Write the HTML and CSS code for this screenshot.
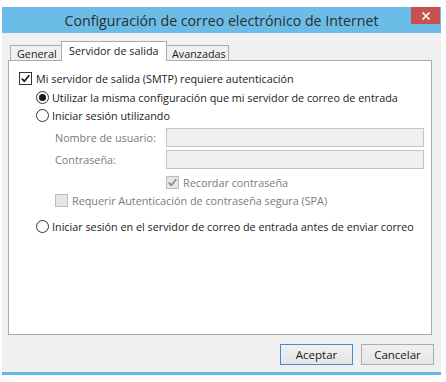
FILE: index.html
```html
<!DOCTYPE html>
<html lang="es">
<head>
	<meta charset="UTF-8">
	<title>Configuración de correo electrónico de Internet</title>
	<link rel="stylesheet" href="styles.css">
</head>
<body>
	<div class="window">
		<div class="titlebar">
			<span class="title">Configuración de correo electrónico de Internet</span>
			<div class="close">
				<svg width="10" height="10" viewBox="0 0 10 10"><path d="M1.5 1.5 L8.5 8.5 M8.5 1.5 L1.5 8.5" stroke="#fff" stroke-width="1.6" fill="none"/></svg>
			</div>
		</div>
		<div class="content">
			<div class="tabs">
				<div class="tab first">General</div>
				<div class="tab active">Servidor de salida</div>
				<div class="tab last">Avanzadas</div>
			</div>
			<div class="panel">
				<div class="row smtp">
					<span class="check on"><svg width="11" height="11" viewBox="0 0 11 11"><path d="M1.8 5.6 L4.3 8.2 L9.3 2.2" stroke="#1a1a1a" stroke-width="1.7" fill="none"/></svg></span>
					<span>Mi servidor de salida (SMTP) requiere autenticación</span>
				</div>
				<div class="row sub same">
					<span class="radio on"></span>
					<span>Utilizar la misma configuración que mi servidor de correo de entrada</span>
				</div>
				<div class="row sub">
					<span class="radio"></span>
					<span>Iniciar sesión utilizando</span>
				</div>
				<div class="row field user">
					<span class="label">Nombre de usuario:</span>
					<span class="input"></span>
				</div>
				<div class="row field pass">
					<span class="label">Contraseña:</span>
					<span class="input"></span>
				</div>
				<div class="row remember off">
					<span class="check dis"><svg width="11" height="11" viewBox="0 0 11 11"><path d="M1.8 5.6 L4.3 8.2 L9.3 2.2" stroke="#8a8a8a" stroke-width="1.7" fill="none"/></svg></span>
					<span>Recordar contraseña</span>
				</div>
				<div class="row spa off">
					<span class="check dis"></span>
					<span>Requerir Autenticación de contraseña segura (SPA)</span>
				</div>
				<div class="row sub before">
					<span class="radio"></span>
					<span>Iniciar sesión en el servidor de correo de entrada antes de enviar correo</span>
				</div>
			</div>
			<div class="buttons">
				<button class="btn default">Aceptar</button>
				<button class="btn">Cancelar</button>
			</div>
		</div>
	</div>
</body>
</html>
```

FILE: styles.css
```css
body{
	margin: 0;
	background: #fff;
	font-family: "Open Sans", "Noto Sans", sans-serif;
	font-size: 10.8px;
	color: #1a1a1a;
}
.window{
	margin: 7px 0 0 2px;
	width: 439px;
	border-bottom: 3px solid #63b5e3;
}
.titlebar{
	position: relative;
	height: 26px;
	background: #6bbde8;
	display: flex;
	align-items: center;
	justify-content: center;
}
.title{
	font-size: 14.2px;
	color: #2d2d2d;
	margin-top: 1px;
}
.close{
	position: absolute;
	top: 0;
	right: 1px;
	width: 29px;
	height: 17px;
	background: #c75050;
	display: flex;
	align-items: center;
	justify-content: center;
}
.content{
	background: #f0f0f0;
	padding: 8px 0 0 6px;
	height: 331px;
}
.tabs{
	display: flex;
	align-items: flex-start;
	padding-left: 2px;
	height: 20px;
	margin-bottom: -1px;
}
.tab{
	box-sizing: border-box;
	height: 15px;
	margin-top: 4px;
	border: 1px solid #acacac;
	border-bottom: none;
	background: #f0f0f0;
	padding: 0 0 0 6px;
	line-height: 15px;
}
.tab.first{
	width: 53px;
}
.tab.last{
	width: 64px;
}
.tab.active{
	position: relative;
	z-index: 1;
	width: 106px;
	height: 20px;
	margin: 0 -2px;
	background: #fff;
	padding-left: 7px;
	line-height: 17px;
}
.panel{
	box-sizing: border-box;
	width: 424px;
	height: 275px;
	background: #fff;
	border: 1px solid #acacac;
	padding: 8px 0 0 10px;
}
.row{
	display: flex;
	align-items: center;
	height: 18px;
	white-space: nowrap;
}
.row.sub{
	padding-left: 17px;
}
.row.same{
	margin-top: 1px;
}
.row.field{
	height: 19px;
	padding-left: 36px;
}
.row.user{
	margin-top: 4px;
}
.row.pass{
	margin-top: 3px;
}
.row.remember{
	margin-top: 4px;
	padding-left: 147px;
}
.row.spa{
	padding-left: 36px;
}
.row.before{
	margin-top: 8px;
}
.off, .label{
	color: #7a7a7a;
}
.label{
	width: 111px;
}
.input{
	box-sizing: border-box;
	width: 258px;
	height: 19px;
	border: 1px solid #b9c6d6;
	background: #efefef;
}
.check{
	flex-shrink: 0;
	box-sizing: border-box;
	width: 13px;
	height: 13px;
	border: 1px solid #333;
	background: #fff;
	margin-right: 4px;
	display: flex;
	align-items: center;
	justify-content: center;
}
.check.dis{
	border-color: #bcbcbc;
	background: #e6e6e6;
}
.radio{
	flex-shrink: 0;
	box-sizing: border-box;
	width: 13px;
	height: 13px;
	border: 1px solid #333;
	border-radius: 50%;
	background: #fff;
	margin-right: 3px;
	display: flex;
	align-items: center;
	justify-content: center;
}
.radio.on::after{
	content: "";
	width: 7px;
	height: 7px;
	border-radius: 50%;
	background: #1a1a1a;
}
.buttons{
	display: flex;
	justify-content: flex-end;
	gap: 8px;
	width: 426px;
	margin-top: 9px;
}
.btn{
	box-sizing: border-box;
	width: 73px;
	height: 21px;
	border: 1px solid #acacac;
	background: linear-gradient(#f0f0f0, #e5e5e5);
	font-family: "Open Sans", "Noto Sans", sans-serif;
	font-size: 11.5px;
	color: #1a1a1a;
	padding: 0;
}
.btn.default{
	border-color: #3c8fd8;
}
```
